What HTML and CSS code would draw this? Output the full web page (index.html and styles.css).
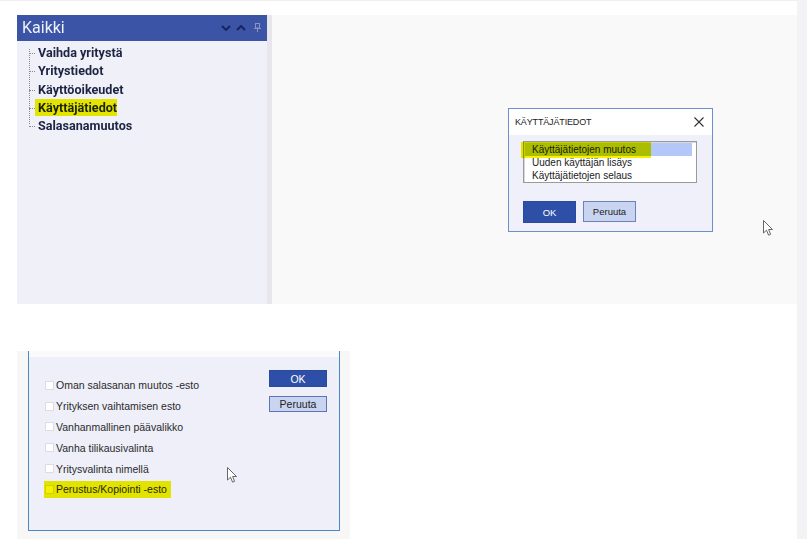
FILE: index.html
```html
<!DOCTYPE html>
<html lang="fi">
<head>
<meta charset="utf-8">
<title>Käyttäjätiedot</title>
<link rel="stylesheet" href="styles.css">
</head>
<body>
<div class="page">
  <div class="topline"></div>
  <section class="shot1">
    <aside class="panel">
      <header class="panel-head">
        <span class="panel-title">Kaikki</span>
        <span class="head-icons">
          <svg class="chev" width="10" height="6" viewBox="0 0 10 6"><polyline points="1,1 5,5 9,1" fill="none" stroke="#16215a" stroke-width="1.8"/></svg>
          <svg class="chev" width="10" height="6" viewBox="0 0 10 6"><polyline points="1,5 5,1 9,5" fill="none" stroke="#16215a" stroke-width="1.8"/></svg>
          <svg class="pin" width="8" height="9" viewBox="0 0 8 9"><rect x="1.5" y="0.5" width="4" height="4.5" fill="none" stroke="#8794c4" stroke-width="1"/><line x1="0" y1="5.5" x2="7" y2="5.5" stroke="#8794c4" stroke-width="1"/><line x1="3.5" y1="5.5" x2="3.5" y2="9" stroke="#8794c4" stroke-width="1"/></svg>
        </span>
      </header>
      <ul class="tree">
        <li>Vaihda yritystä</li>
        <li>Yritystiedot</li>
        <li>Käyttöoikeudet</li>
        <li class="marked">Käyttäjätiedot<span class="hl hl-tree"></span></li>
        <li>Salasanamuutos</li>
      </ul>
    </aside>
    <div class="splitter"></div>
    <div class="canvas">
      <div class="dialog">
        <div class="dlg-title">
          <span>KÄYTTÄJÄTIEDOT</span>
          <svg class="close" width="10" height="10" viewBox="0 0 10 10"><path d="M0.5 0.5 L9.5 9.5 M9.5 0.5 L0.5 9.5" stroke="#333" stroke-width="1.1"/></svg>
        </div>
        <div class="dlg-body">
          <ul class="listbox">
            <li class="sel">Käyttäjätietojen muutos</li>
            <li>Uuden käyttäjän lisäys</li>
            <li>Käyttäjätietojen selaus</li>
            <span class="hl hl-list"></span>
          </ul>
          <div class="dlg-buttons">
            <button class="btn btn-ok">OK</button>
            <button class="btn btn-cancel">Peruuta</button>
          </div>
        </div>
      </div>
      <svg class="cursor cursor-top" width="11" height="17" viewBox="0 0 11 17"><path d="M0.5 0.5 L0.5 13 L3.5 10.2 L5.6 15.2 L7.6 14.3 L5.6 9.5 L9.5 9.5 Z" fill="#fff" stroke="#666" stroke-width="1"/></svg>
    </div>
  </section>
  <section class="shot2">
    <div class="dlg2">
      <div class="dlg2-top"></div>
      <div class="dlg2-body">
        <ul class="checks">
          <li><span class="box"></span>Oman salasanan muutos -esto</li>
          <li><span class="box"></span>Yrityksen vaihtamisen esto</li>
          <li><span class="box"></span>Vanhanmallinen päävalikko</li>
          <li><span class="box"></span>Vanha tilikausivalinta</li>
          <li><span class="box"></span>Yritysvalinta nimellä</li>
          <li class="marked"><span class="box"></span>Perustus/Kopiointi -esto<span class="hl hl-check"></span></li>
        </ul>
        <div class="side-buttons">
          <button class="btn2 btn2-ok">OK</button>
          <button class="btn2 btn2-cancel">Peruuta</button>
        </div>
        <svg class="cursor cursor-bottom" width="11" height="17" viewBox="0 0 11 17"><path d="M0.5 0.5 L0.5 13 L3.5 10.2 L5.6 15.2 L7.6 14.3 L5.6 9.5 L9.5 9.5 Z" fill="#fff" stroke="#666" stroke-width="1"/></svg>
      </div>
    </div>
  </section>
</div>
<div class="strip"></div>
</body>
</html>
```

FILE: styles.css
```css
* { box-sizing: border-box; }
html, body { margin: 0; padding: 0; }
body {
  display: flex;
  height: 539px;
  overflow: hidden;
  background: #ffffff;
  font-family: "Liberation Sans", Arial, sans-serif;
}
.page { width: 797px; display: flex; flex-direction: column; }
.strip { flex: 1; background: #f3f3f5; }
.topline { height: 1px; background: #efeff2; }

/* ---------- top screenshot ---------- */
.shot1 {
  display: flex;
  margin: 14px 0 0 17px;
  width: 780px;
  height: 289px;
}
.panel { width: 250px; background: #eff0f8; display: flex; flex-direction: column; }
.panel-head {
  height: 26px;
  background: #3b54a5;
  display: flex;
  align-items: center;
  padding: 0 5px 0 5px;
}
.panel-title {
  font-family: Roboto, "Noto Sans", sans-serif;
  font-size: 16px;
  color: #eef1fb;
  flex: 1;
  line-height: 1;
}
.head-icons { display: flex; align-items: center; gap: 5px; }
.chev { display: block; }
.pin { display: block; margin-left: 3px; margin-top: -2px; }

.tree {
  list-style: none;
  margin: 0;
  padding: 3px 0 0 21px;
  position: relative;
  font-family: Roboto, "Noto Sans", sans-serif;
  font-weight: 700;
  font-size: 12.6px;
  color: #1d2442;
}
.tree::before {
  content: "";
  position: absolute;
  left: 12px;
  top: 8px;
  height: 75px;
  border-left: 1px dotted #8a8a8a;
}
.tree li {
  position: relative;
  height: 18.3px;
  line-height: 18.3px;
}
.tree li::before {
  content: "";
  position: absolute;
  left: -9px;
  top: 9px;
  width: 6px;
  border-top: 1px dotted #8a8a8a;
}
.hl {
  position: absolute;
  background: #f3f300;
  mix-blend-mode: multiply;
}
.hl-tree { left: -3px; top: 0px; width: 82px; height: 17px; }

.splitter { width: 5px; background: #e7e7eb; }
.canvas { flex: 1; background: #f9f9fa; position: relative; padding: 93px 0 0 236px; }

.dialog {
  width: 205px;
  height: 124px;
  border: 1px solid #6d8fcb;
  background: #f0f0fa;
  display: flex;
  flex-direction: column;
}
.dlg-title {
  height: 26px;
  background: #ffffff;
  display: flex;
  align-items: center;
  justify-content: space-between;
  padding: 0 8px 0 6px;
  font-size: 9px;
  letter-spacing: -0.15px;
  color: #222;
}
.close { display: block; }
.dlg-body { padding: 6px 0 0 14px; }
.listbox {
  position: relative;
  list-style: none;
  margin: 0;
  padding: 1px 0 0 0;
  width: 174px;
  height: 42px;
  background: #fff;
  border: 1px solid #9a9a9a;
  box-shadow: inset 1px 1px 0 #d8d8d8;
  font-size: 10px;
  color: #1a1a1a;
}
.listbox li { height: 13px; line-height: 13px; padding-left: 7px; margin: 0 4px 0 1px; }
.listbox li.sel { background: #b3c7f8; }
.hl-list { left: -3px; top: 0px; width: 130px; height: 16px; }
.dlg-buttons { display: flex; gap: 7px; margin-top: 18px; }
.btn {
  font-family: "Liberation Sans", Arial, sans-serif;
  font-size: 9.5px;
  height: 22px;
  width: 53px;
  padding: 0;
  border: 1px solid #2a4a9e;
  cursor: default;
}
.btn-ok { background: #2e4fa7; color: #fff; }
.btn-cancel { background: #c9d4f1; color: #222; border-color: #6d81bb; height: 21px; }

.cursor { position: absolute; display: block; }
.cursor-top { left: 491px; top: 205px; }

/* ---------- bottom screenshot ---------- */
.shot2 {
  margin: 47px 0 0 17px;
  width: 333px;
  height: 188px;
  background: #f7f7f8;
}
.dlg2 {
  margin-left: 11px;
  width: 312px;
  height: 180px;
  border: 1.5px solid #4b88c4;
  border-top: none;
  display: flex;
  flex-direction: column;
}
.dlg2-top { height: 6px; background: #fafafd; }
.dlg2-body {
  flex: 1;
  background: #eeeff9;
  display: flex;
  position: relative;
  padding: 0 0 0 16px;
}
.checks {
  list-style: none;
  margin: 0;
  padding: 18px 0 0 0;
  width: 224px;
  font-size: 10.5px;
  color: #2a2a2a;
}
.checks li {
  position: relative;
  height: 20.8px;
  display: flex;
  align-items: center;
}
.box {
  width: 9px;
  height: 9px;
  background: #fff;
  border: 1px solid #dcdce4;
  margin-right: 2px;
  flex: none;
}
.hl-check { left: -1px; top: 2px; width: 127px; height: 17px; }
.side-buttons {
  display: flex;
  flex-direction: column;
  padding-top: 13px;
  gap: 9px;
}
.btn2 {
  font-family: "Liberation Sans", Arial, sans-serif;
  font-size: 10.5px;
  width: 58px;
  height: 17px;
  padding: 0;
  border: 1px solid #2a4a9e;
}
.btn2-ok { background: #2e4fa7; color: #fff; }
.btn2-cancel { background: #c9d4f1; color: #222; border-color: #5f74b4; height: 16px; }
.cursor-bottom { left: 198px; top: 110px; }
```
